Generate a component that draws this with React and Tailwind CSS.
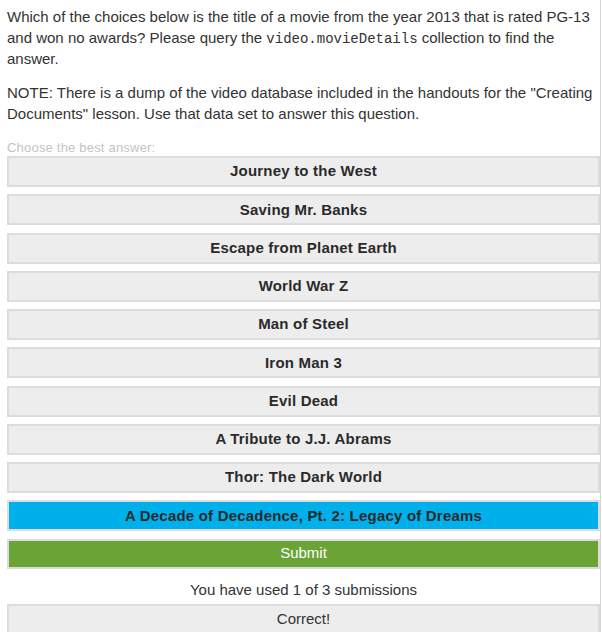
import React, { useState } from "react";

const choices = [
   "Journey to the West",
   "Saving Mr. Banks",
   "Escape from Planet Earth",
   "World War Z",
   "Man of Steel",
   "Iron Man 3",
   "Evil Dead",
   "A Tribute to J.J. Abrams",
   "Thor: The Dark World",
   "A Decade of Decadence, Pt. 2: Legacy of Dreams",
];

const App = () => {
   const [selected, setSelected] = useState(9);

   return (
      <div className="w-[602px] h-[632px] overflow-hidden bg-white text-[#333] font-['Liberation_Sans',Arial,sans-serif]">
         <div className="w-[601px] pl-[7px] pr-[1px] pt-[7px] border-r border-r-[#d6d6d6] min-h-[632px]">
            <p className="text-[15px] leading-[20.5px] pr-1">
               Which of the choices below is the title of a movie from the year 2013 that is rated PG-13 and won no awards? Please query the{" "}
               <code className="font-['Liberation_Mono','Courier_New',monospace] text-[14px]">video.movieDetails</code>{" "}
               collection to find the answer.
            </p>
            <p className="text-[15px] leading-[20.5px] mt-[13.5px] pr-1">
               NOTE: There is a dump of the video database included in the handouts for the "Creating Documents" lesson. Use that data set to answer this question.
            </p>
            <div className="mt-[15.5px] text-[13px] leading-[15px] text-[#c4c4c4] tracking-[0.2px]">
               Choose the best answer:
            </div>
            <div className="flex flex-col gap-[7.25px] mt-[1.5px] w-[593px]">
               {choices.map((c, i) => (
                  <button
                     key={c}
                     onClick={() => setSelected(i)}
                     className={
                        i === selected
                           ? "h-[31px] w-full border-2 border-[#dcdcdc] bg-[#00b0ea] text-[15px] font-bold tracking-[0.2px] text-[#2a2a2a] flex items-center justify-center"
                           : "h-[31px] w-full border-2 border-[#dcdcdc] bg-[#ededed] text-[15px] font-bold tracking-[0.2px] text-[#2a2a2a] flex items-center justify-center"
                     }
                  >
                     {c}
                  </button>
               ))}
               <button className="h-[30px] w-full border-2 border-[#dcdcdc] bg-[#6ca337] text-white text-[15px] flex items-center justify-center">
                  Submit
               </button>
            </div>
            <div className="w-[593px] text-center text-[15px] leading-[17px] mt-[12px]">
               You have used 1 of 3 submissions
            </div>
            <div className="w-[593px] h-[31px] mt-[6px] border-2 border-[#dcdcdc] bg-[#ededed] text-[15px] flex items-center justify-center">
               Correct!
            </div>
         </div>
      </div>
   );
};

export default App;
